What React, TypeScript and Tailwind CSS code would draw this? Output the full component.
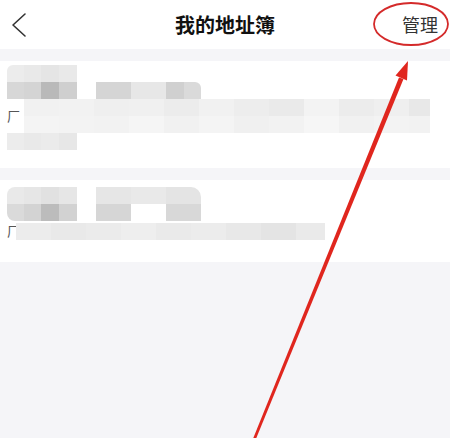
import React from 'react';

type Cell = { w: string; c: string };

// blurred address text, drawn as mosaic cells
const Mosaic = ({ rows, className = '' }: { rows: Cell[][]; className?: string }) => (
  <div className={`flex flex-col ${className}`}>
    {rows.map((row, i) => (
      <div key={i} className="flex h-[17px]">
        {row.map((cell, j) => (
          <div key={j} className={`h-full ${cell.w} ${cell.c}`} />
        ))}
      </div>
    ))}
  </div>
);

const nameA: Cell[][] = [
  [
    { w: 'w-[17px]', c: 'bg-[#ececec]' },
    { w: 'w-[17px]', c: 'bg-[#e9e9e9]' },
    { w: 'w-[18px]', c: 'bg-[#e5e5e5]' },
    { w: 'w-[18px]', c: 'bg-[#e9e9e9]' },
  ],
  [
    { w: 'w-[17px]', c: 'bg-[#d7d7d7]' },
    { w: 'w-[17px]', c: 'bg-[#d4d4d4]' },
    { w: 'w-[18px]', c: 'bg-[#b9b9b9]' },
    { w: 'w-[18px]', c: 'bg-[#cfcfcf]' },
  ],
];

const phoneA: Cell[][] = [
  [
    { w: 'w-[35px]', c: 'bg-[#d5d5d5]' },
    { w: 'w-[35px]', c: 'bg-[#e7e7e7]' },
    { w: 'w-[18px]', c: 'bg-[#d0d0d0]' },
    { w: 'w-[17px]', c: 'bg-[#dadada]' },
  ],
];

const lineA: Cell[][] = [
  [
    { w: 'w-[35px]', c: 'bg-[#f1f1f1]' },
    { w: 'w-[35px]', c: 'bg-[#f2f2f2]' },
    { w: 'w-[35px]', c: 'bg-[#efefef]' },
    { w: 'w-[35px]', c: 'bg-[#f0f0f0]' },
    { w: 'w-[35px]', c: 'bg-[#ececec]' },
    { w: 'w-[35px]', c: 'bg-[#f1f1f1]' },
    { w: 'w-[35px]', c: 'bg-[#ededed]' },
    { w: 'w-[35px]', c: 'bg-[#eaeaea]' },
    { w: 'w-[35px]', c: 'bg-[#f3f3f3]' },
    { w: 'w-[35px]', c: 'bg-[#ececec]' },
    { w: 'w-[35px]', c: 'bg-[#efefef]' },
    { w: 'w-[21px]', c: 'bg-[#e8e8e8]' },
  ],
  [
    { w: 'w-[35px]', c: 'bg-[#f4f4f4]' },
    { w: 'w-[35px]', c: 'bg-[#f3f3f3]' },
    { w: 'w-[35px]', c: 'bg-[#f2f2f2]' },
    { w: 'w-[35px]', c: 'bg-[#f5f5f5]' },
    { w: 'w-[35px]', c: 'bg-[#f1f1f1]' },
    { w: 'w-[35px]', c: 'bg-[#f4f4f4]' },
    { w: 'w-[35px]', c: 'bg-[#f0f0f0]' },
    { w: 'w-[35px]', c: 'bg-[#f2f2f2]' },
    { w: 'w-[35px]', c: 'bg-[#f6f6f6]' },
    { w: 'w-[35px]', c: 'bg-[#f1f1f1]' },
    { w: 'w-[35px]', c: 'bg-[#f3f3f3]' },
    { w: 'w-[21px]', c: 'bg-[#f2f2f2]' },
  ],
];

const tagA: Cell[][] = [
  [
    { w: 'w-[17px]', c: 'bg-[#ececec]' },
    { w: 'w-[17px]', c: 'bg-[#e9e9e9]' },
    { w: 'w-[18px]', c: 'bg-[#ebebeb]' },
    { w: 'w-[18px]', c: 'bg-[#e7e7e7]' },
  ],
];

const nameB: Cell[][] = [
  [
    { w: 'w-[17px]', c: 'bg-[#e9e9e9]' },
    { w: 'w-[17px]', c: 'bg-[#e6e6e6]' },
    { w: 'w-[18px]', c: 'bg-[#e1e1e1]' },
    { w: 'w-[18px]', c: 'bg-[#e6e6e6]' },
  ],
  [
    { w: 'w-[17px]', c: 'bg-[#dadada]' },
    { w: 'w-[17px]', c: 'bg-[#d3d3d3]' },
    { w: 'w-[18px]', c: 'bg-[#bcbcbc]' },
    { w: 'w-[18px]', c: 'bg-[#d2d2d2]' },
  ],
];

const phoneB: Cell[][] = [
  [
    { w: 'w-[35px]', c: 'bg-[#e6e6e6]' },
    { w: 'w-[35px]', c: 'bg-[#e9e9e9]' },
    { w: 'w-[35px]', c: 'bg-[#e4e4e4]' },
  ],
  [
    { w: 'w-[35px]', c: 'bg-[#d6d6d6]' },
    { w: 'w-[35px]', c: 'bg-white' },
    { w: 'w-[35px]', c: 'bg-[#d8d8d8]' },
  ],
];

const lineB: Cell[][] = [
  [
    { w: 'w-[35px]', c: 'bg-[#ececec]' },
    { w: 'w-[35px]', c: 'bg-[#e9e9e9]' },
    { w: 'w-[35px]', c: 'bg-[#ebebeb]' },
    { w: 'w-[35px]', c: 'bg-[#eeeeee]' },
    { w: 'w-[35px]', c: 'bg-[#eaeaea]' },
    { w: 'w-[35px]', c: 'bg-[#ececec]' },
    { w: 'w-[35px]', c: 'bg-[#e8e8e8]' },
    { w: 'w-[35px]', c: 'bg-[#e4e4e4]' },
    { w: 'w-[29px]', c: 'bg-[#eaeaea]' },
  ],
];

const App = () => {
  return (
    <div className="relative w-[450px] h-[438px] overflow-hidden bg-[#f5f5f8] font-['Noto_Sans_CJK_SC',sans-serif]">
      {/* Header */}
      <div className="flex h-[49px] items-center bg-white">
        <div className="flex w-[60px] pl-[10px]">
          <svg width="18" height="26" viewBox="0 0 18 26" fill="none">
            <path d="M15 2 L3 13 L15 24" stroke="#333" strokeWidth="1.6" strokeLinecap="round" strokeLinejoin="round" />
          </svg>
        </div>
        <div className="flex-1 text-center text-[20px] font-bold text-[#111]">我的地址簿</div>
        <div className="flex w-[60px] justify-end pr-[12px] text-[18px] text-[#333]">管理</div>
      </div>

      <div className="h-[12px]" />

      {/* Address 1 */}
      <div className="flex h-[107px] flex-col bg-white pl-[7px] pt-[4px]">
        <div className="flex items-end">
          <Mosaic rows={nameA} className="rounded-tl-[6px] overflow-hidden" />
          <Mosaic rows={phoneA} className="ml-[19px] rounded-tr-[6px] overflow-hidden" />
        </div>
        <div className="flex items-center">
          <span className="w-[17px] text-[13px] leading-[34px] text-[#555]">厂</span>
          <Mosaic rows={lineA} />
        </div>
        <Mosaic rows={tagA} />
      </div>

      <div className="h-[12px]" />

      {/* Address 2 */}
      <div className="flex h-[82px] flex-col bg-white pl-[7px] pt-[7px]">
        <div className="flex items-end">
          <Mosaic rows={nameB} className="rounded-l-[8px] overflow-hidden" />
          <Mosaic rows={phoneB} className="ml-[19px] rounded-tr-[10px] overflow-hidden" />
        </div>
        <div className="flex items-center">
          <span className="w-[9px] text-[13px] leading-[20px] text-[#555]">厂</span>
          <Mosaic rows={lineB} />
        </div>
      </div>

      {/* Annotation overlay */}
      <svg className="pointer-events-none absolute inset-0" width="450" height="438" viewBox="0 0 450 438">
        <ellipse cx="411" cy="24" rx="37" ry="21" fill="none" stroke="#d42a2a" strokeWidth="1.8" />
        <path d="M252.5 440 L255.5 440 L403.5 79 L399 77.5 Z" fill="#e0261e" />
        <path d="M408 61 L407 80.5 L395.5 75.5 Z" fill="#e0261e" />
      </svg>
    </div>
  );
};

export default App;
